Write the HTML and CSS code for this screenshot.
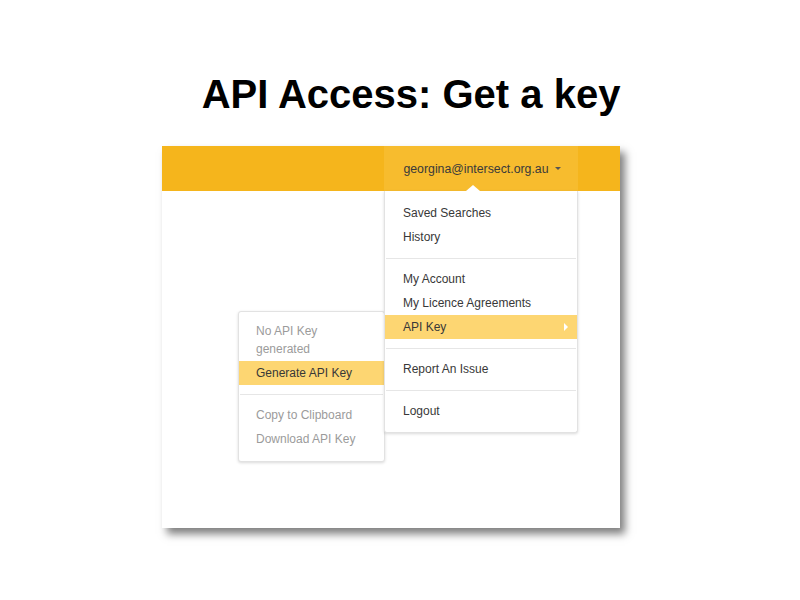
FILE: index.html
```html
<!DOCTYPE html>
<html>
<head>
<meta charset="utf-8">
<link rel="stylesheet" href="styles.css">
</head>
<body>
<h1 class="title">API Access: Get a key</h1>
<div class="shot">
  <div class="navbar">
    <div class="user">georgina@intersect.org.au<span class="caret"></span></div>
  </div>
  <div class="submenu">
    <div class="item muted two">No API Key<br>generated</div>
    <div class="item active">Generate API Key</div>
    <div class="divider"></div>
    <div class="item muted">Copy to Clipboard</div>
    <div class="item muted">Download API Key</div>
  </div>
  <div class="menu">
    <div class="item">Saved Searches</div>
    <div class="item">History</div>
    <div class="divider"></div>
    <div class="item">My Account</div>
    <div class="item">My Licence Agreements</div>
    <div class="item active sub">API Key<span class="arrow"></span></div>
    <div class="divider"></div>
    <div class="item">Report An Issue</div>
    <div class="divider"></div>
    <div class="item">Logout</div>
  </div>
</div>
</body>
</html>
```
FILE: styles.css
```css
html, body {
  margin: 0;
  padding: 0;
  background: #fff;
}
body {
  width: 800px;
  height: 600px;
  font-family: "Liberation Sans", Arial, sans-serif;
}
.title {
  margin: 0;
  padding-top: 72px;
  padding-left: 22px;
  height: 146px;
  box-sizing: border-box;
  text-align: center;
  font-size: 40px;
  line-height: 44px;
  font-weight: bold;
  color: #000;
  white-space: nowrap;
}
.shot {
  position: relative;
  margin-left: 162px;
  width: 458px;
  height: 382px;
  background: #fff;
  box-shadow: 5px 6px 8px rgba(0, 0, 0, 0.5);
  font-size: 12px;
  color: #333;
}
.navbar {
  height: 45px;
  background: #f5b51c;
  display: flex;
}
.user {
  margin-left: 222px;
  width: 194px;
  background: #f7bc2e;
  display: flex;
  align-items: center;
  justify-content: center;
  color: #3a3a3a;
  font-size: 12.3px;
  padding-left: 2px;
  box-sizing: border-box;
}
.caret {
  display: inline-block;
  margin-left: 6px;
  width: 0;
  height: 0;
  border-left: 3px solid transparent;
  border-right: 3px solid transparent;
  border-top: 3px solid #555;
  margin-top: -1px;
}
.menu {
  position: absolute;
  left: 222px;
  top: 45px;
  width: 194px;
  box-sizing: border-box;
  padding: 10px 0 9px;
  background: #fff;
  border: 1px solid #e2e2e2;
  border-top: none;
  border-radius: 0 0 3px 3px;
  box-shadow: 0 1px 3px rgba(0, 0, 0, 0.15);
  z-index: 2;
}
.menu::before {
  content: "";
  position: absolute;
  top: -6px;
  left: 81px;
  border-left: 7px solid transparent;
  border-right: 7px solid transparent;
  border-bottom: 6px solid #fff;
}
.item {
  height: 24px;
  line-height: 24px;
  padding-left: 18px;
  white-space: nowrap;
}
.menu .item {
  color: #383838;
}
.item.active {
  background: #fdd672;
}
.sub {
  position: relative;
}
.arrow {
  position: absolute;
  right: 9px;
  top: 8px;
  border-top: 4px solid transparent;
  border-bottom: 4px solid transparent;
  border-left: 4px solid #fff;
}
.divider {
  height: 1px;
  background: #e6e6e6;
  margin: 9px 1px 8px;
}
.submenu {
  position: absolute;
  left: 76px;
  top: 165px;
  width: 147px;
  box-sizing: border-box;
  padding: 10px 0 10px;
  background: #fff;
  border: 1px solid #e2e2e2;
  border-radius: 3px;
  box-shadow: 0 1px 3px rgba(0, 0, 0, 0.15);
  z-index: 1;
}
.submenu .item {
  color: #383838;
  padding-left: 17px;
}
.submenu .muted {
  color: #9b9b9b;
}
.submenu .two {
  height: auto;
  line-height: 18px;
  padding-bottom: 3px;
}
```
